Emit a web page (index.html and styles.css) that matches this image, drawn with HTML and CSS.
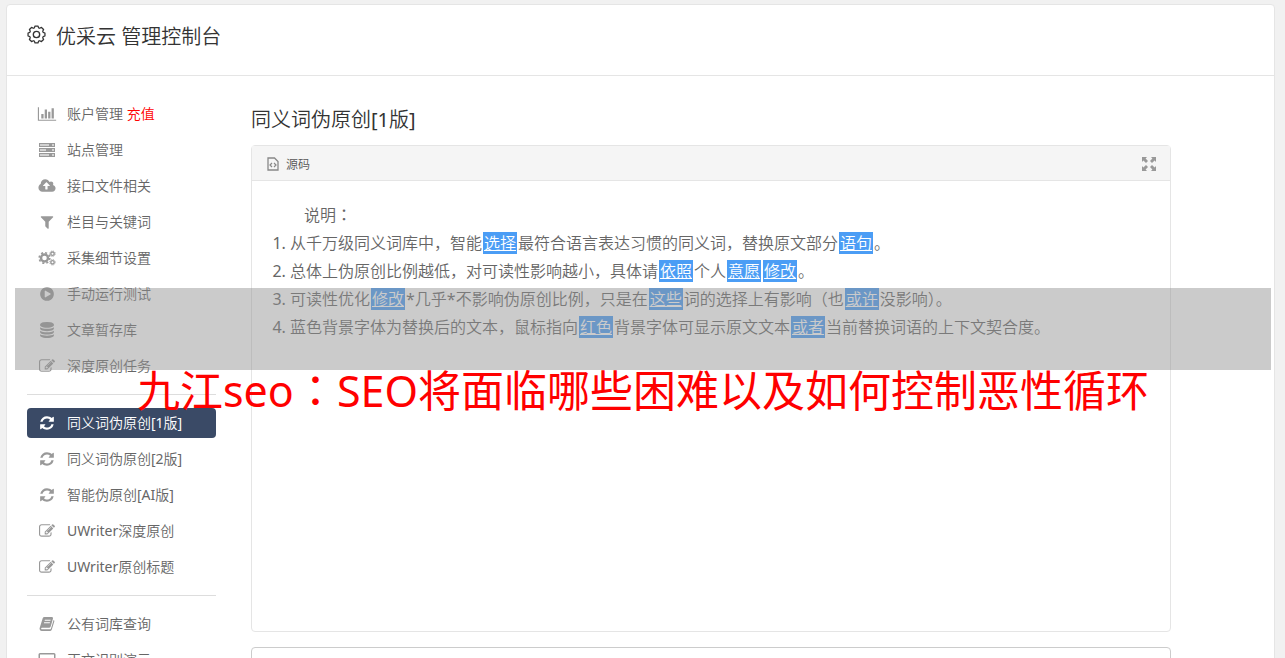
FILE: index.html
```html
<!DOCTYPE html>
<html lang="zh-CN">
<head>
    <meta charset="UTF-8">
    <meta name="viewport" content="width=device-width, initial-scale=1.0">
    <title>优采云 管理控制台</title>
    <link rel="stylesheet" href="styles.css">
</head>
<body>

<svg class="sprite" aria-hidden="true">
    <symbol id="chart" viewBox="0 0 2048 1792"><path d="M640 896v512h-256v-512h256zm384-512v1024h-256v-1024h256zm1024 1152v128h-2048v-1536h128v1408h1920zm-640-896v768h-256v-768h256zm384-384v1152h-256v-1152h256z"/></symbol>
    <symbol id="server" viewBox="0 0 18 16"><path opacity=".45" d="M1 1h16v4H1zM1 6h16v4H1zM1 11h16v4H1z"/><path d="M1 1h16v1H1zM1 4h16v1H1zM1 6h16v1H1zM1 9h16v1H1zM1 11h16v1H1zM1 14h16v1H1zM1 1h1v4H1zM1 6h1v4H1zM1 11h1v4H1zM11 2h3v2h-3zM16 2h1v2h-1zM8 7h6v2H8zM16 7h1v2h-1zM11 12h3v2h-3zM16 12h1v2h-1z"/></symbol>
    <symbol id="cloud" viewBox="0 0 1920 1792"><path d="M1280 864q0-14-9-23l-352-352q-9-9-23-9t-23 9l-351 351q-10 12-10 24 0 14 9 23t23 9h224v352q0 13 9.500 22.500t22.500 9.500h192q13 0 22.500-9.500t9.500-22.500v-352h224q13 0 22.500-9.500t9.500-22.500zm640 288q0 159-112.500 271.500t-271.500 112.500h-1088q-185 0-316.500-131.500t-131.500-316.500q0-130 70-240t188-165q-2-30-2-43 0-212 150-362t362-150q156 0 285.500 87t188.500 231q71-62 166-62 106 0 181 75t75 181q0 76-41 138 130 31 213.500 135.500t83.500 238.500z"/></symbol>
    <symbol id="filter" viewBox="0 0 1792 1792"><path d="M1595 295q17 41-14 70l-493 493v742q0 42-39 59-13 5-25 5-27 0-45-19l-256-256q-19-19-19-45v-486l-493-493q-31-29-14-70 17-39 59-39h1280q42 0 59 39z"/></symbol>
    <symbol id="cogs" viewBox="0 0 18 16">
        <g fill="none" stroke="currentColor">
            <circle cx="6.500" cy="8" r="3.500" stroke-width="2.400"/>
            <circle cx="6.500" cy="8" r="5.300" stroke-width="1.600" stroke-dasharray="2.080 2.080"/>
            <circle cx="14.500" cy="3.700" r="1.700" stroke-width="1.400"/>
            <circle cx="14.500" cy="3.700" r="2.700" stroke-width="1" stroke-dasharray="1.060 1.060"/>
            <circle cx="14.500" cy="12.300" r="1.700" stroke-width="1.400"/>
            <circle cx="14.500" cy="12.300" r="2.700" stroke-width="1" stroke-dasharray="1.060 1.060"/>
        </g>
    </symbol>
    <symbol id="play" viewBox="0 0 1792 1792"><path d="M896 128q209 0 385.500 103t279.500 279.500 103 385.500-103 385.500-279.500 279.500-385.500 103-385.500-103-279.500-279.500-103-385.500 103-385.500 279.500-279.500 385.500-103zm384 823q32-18 32-55t-32-55l-544-320q-31-19-64-1-32 19-32 56v640q0 37 32 56 16 8 32 8 17 0 32-9z"/></symbol>
    <symbol id="database" viewBox="0 0 1792 1792"><path d="M896 768q237 0 443-43t325-127v170q0 69-103 128t-280 93.500-385 34.500-385-34.500-280-93.500-103-128v-170q119 84 325 127t443 43zm0 768q237 0 443-43t325-127v170q0 69-103 128t-280 93.500-385 34.500-385-34.500-280-93.500-103-128v-170q119 84 325 127t443 43zm0-384q237 0 443-43t325-127v170q0 69-103 128t-280 93.500-385 34.500-385-34.500-280-93.500-103-128v-170q119 84 325 127t443 43zm0-1152q208 0 385 34.500t280 93.500 103 128v128q0 69-103 128t-280 93.500-385 34.500-385-34.500-280-93.500-103-128v-128q0-69 103-128t280-93.500 385-34.500z"/></symbol>
    <symbol id="edit" viewBox="0 0 1792 1792"><path d="M888 1184l116-116-152-152-116 116v56h96v96h56zm440-720q-16-16-33 1l-350 350q-17 17-1 33t33-1l350-350q17-17 1-33zm80 594v190q0 119-84.500 203.500t-203.500 84.500h-832q-119 0-203.500-84.500t-84.500-203.500v-832q0-119 84.500-203.500t203.500-84.500h832q63 0 117 25 15 7 18 23 3 17-9 29l-49 49q-14 14-32 8-23-6-45-6h-832q-66 0-113 47t-47 113v832q0 66 47 113t113 47h832q66 0 113-47t47-113v-126q0-13 9-22l64-64q15-15 35-7t20 29zm-96-738l288 288-672 672h-288v-288zm444 132l-92 92-288-288 92-92q28-28 68-28t68 28l152 152q28 28 28 68t-28 68z"/></symbol>
    <symbol id="refresh" viewBox="0 0 1792 1792"><path d="M1639 1056q0 5-1 7-64 268-268 434.500t-478 166.500q-146 0-282.500-55t-243.500-157l-129 129q-19 19-45 19t-45-19-19-45v-448q0-26 19-45t45-19h448q26 0 45 19t19 45-19 45l-137 137q71 66 161 102t187 36q134 0 250-65t186-179q11-17 53-117 8-23 30-23h192q13 0 22.500 9.500t9.500 22.500zm25-800v448q0 26-19 45t-45 19h-448q-26 0-45-19t-19-45 19-45l138-138q-148-137-349-137-134 0-250 65t-186 179q-11 17-53 117-8 23-30 23h-199q-13 0-22.500-9.500t-9.500-22.500v-7q65-268 270-434.500t480-166.500q146 0 284 55.500t245 156.500l130-129q19-19 45-19t45 19 19 45z"/></symbol>
    <symbol id="book" viewBox="0 0 16 16"><path fill-rule="evenodd" d="M5.500 1H13q1.300.2 1 1.600L11.700 10.500q-.4 1.200-1.700 1.200H2.800q-1 .3-.6 1.100.2.500 1 .5h7.600q.9 0 1.200-.9L14.600 4q1 .4.700 1.500l-2.500 8q-.5 1.500-2 1.500H3q-1.700 0-2.300-1.600-.3-.8.100-1.900L3.700 2.300Q4.100 1 5.500 1zM5.900 3.800l-.3 1h5.800l.3-1zM5.200 6.200l-.3 1h5.800l.3-1z"/></symbol>
    <symbol id="screen" viewBox="0 0 18 16"><path fill-rule="evenodd" d="M2 1h14q1.500 0 1.500 1.500v9q0 1.500-1.500 1.500h-4v2H6v-2H2Q.5 13 .5 11.500v-9Q.5 1 2 1zm0 1.500v9h14v-9z"/></symbol>
</svg>

<div class="card">
    <header class="card-header">
        <svg class="gear" viewBox="0 0 18 18" fill="none" stroke="currentColor">
            <path stroke-width="1.200" stroke-linejoin="round" d="M7.600 1h2.800l.6 1.700 1 .4 1.700-.8 2 2-.8 1.700.4 1 1.700.6v2.800l-1.700.6-.4 1 .8 1.700-2 2-1.700-.8-1 .4-.6 1.700H7.600L7 15.300l-1-.4-1.700.8-2-2 .8-1.700-.4-1L1 10.400V7.600L2.700 7l.4-1-.8-1.700 2-2L6 3.100l1-.4z"/>
            <circle cx="9" cy="9" r="3" stroke-width="1.300"/>
        </svg>
        <h1 class="card-title">优采云 管理控制台</h1>
    </header>

    <div class="layout">
        <nav class="sidebar">
            <ul class="menu">
                <li><a href="#"><svg class="icon"><use href="#chart"/></svg>账户管理 <span class="pay">充值</span></a></li>
                <li><a href="#"><svg class="icon"><use href="#server"/></svg>站点管理</a></li>
                <li><a href="#"><svg class="icon"><use href="#cloud"/></svg>接口文件相关</a></li>
                <li><a href="#"><svg class="icon"><use href="#filter"/></svg>栏目与关键词</a></li>
                <li><a href="#"><svg class="icon"><use href="#cogs"/></svg>采集细节设置</a></li>
                <li><a href="#"><svg class="icon"><use href="#play"/></svg>手动运行测试</a></li>
                <li><a href="#"><svg class="icon"><use href="#database"/></svg>文章暂存库</a></li>
                <li><a href="#"><svg class="icon"><use href="#edit"/></svg>深度原创任务</a></li>
            </ul>
            <ul class="menu">
                <li><a href="#" class="active"><svg class="icon"><use href="#refresh"/></svg>同义词伪原创[1版]</a></li>
                <li><a href="#"><svg class="icon"><use href="#refresh"/></svg>同义词伪原创[2版]</a></li>
                <li><a href="#"><svg class="icon"><use href="#refresh"/></svg>智能伪原创[AI版]</a></li>
                <li><a href="#"><svg class="icon"><use href="#edit"/></svg>UWriter深度原创</a></li>
                <li><a href="#"><svg class="icon"><use href="#edit"/></svg>UWriter原创标题</a></li>
            </ul>
            <ul class="menu">
                <li><a href="#"><svg class="icon"><use href="#book"/></svg>公有词库查询</a></li>
                <li><a href="#"><svg class="icon"><use href="#screen"/></svg>正文识别演示</a></li>
            </ul>
        </nav>

        <main class="content">
            <h2 class="content-title">同义词伪原创[1版]</h2>

            <section class="editor">
                <div class="toolbar">
                    <button type="button" class="tool">
                        <svg class="tool-icon" viewBox="0 0 12 14" fill="none" stroke="currentColor">
                            <path stroke-width="1.300" d="M1 1h6.500L11 4.500V13H1z"/>
                            <path stroke-width="1.200" d="M5 6L3 8l2 2M7 6l2 2-2 2"/>
                        </svg>
                        源码
                    </button>
                    <button type="button" class="tool" aria-label="全屏">
                        <svg class="expand-icon" viewBox="0 0 14 14" fill="currentColor">
                            <path d="M0 0h5L3.600 1.400 6 4 4 6 1.400 3.600 0 5zM14 0v5l-1.400-1.400L10 6 8 4l2.400-2.600L9 0zM0 14V9l1.400 1.400L4 8l2 2-2.400 2.600L5 14zM14 14H9l1.400-1.400L8 10l2-2 2.600 2.400L14 9z"/>
                        </svg>
                    </button>
                </div>
                <div class="editor-body">
                    <p class="note">说明<span class="mark" lang="zh-TW">：</span></p>
                    <ol class="rules">
                        <li>从千万级同义词库中，智能<u class="word">选择</u>最符合语言表达习惯的同义词，替换原文部分<u class="word">语句</u>。</li>
                        <li>总体上伪原创比例越低，对可读性影响越小，具体请<u class="word">依照</u>个人<u class="word">意愿</u><u class="word">修改</u>。</li>
                        <li>可读性优化<u class="word">修改</u>*几乎*不影响伪原创比例，只是在<u class="word">这些</u>词的选择上有影响（也<u class="word">或许</u>没影响）。</li>
                        <li>蓝色背景字体为替换后的文本，鼠标指向<u class="word">红色</u>背景字体可显示原文文本<u class="word">或者</u>当前替换词语的上下文契合度。</li>
                    </ol>
                </div>
            </section>

            <textarea class="result" rows="5" aria-label="结果"></textarea>
        </main>
    </div>
</div>

<div class="banner">
    <div class="banner-strip"></div>
    <p class="banner-text">九江seo<span class="mark" lang="zh-TW">：</span>SEO将面临哪些困难以及如何控制恶性循环</p>
</div>

</body>
</html>
```

FILE: styles.css
```css
* {
    box-sizing: border-box;
}
body {
    margin: 0;
    padding: 4px 10px 0 6px;
    height: 100vh;
    overflow: hidden;
    background-color: #f1f1f1;
    color: #666;
    font-family: "Noto Sans", "Noto Sans CJK SC DemiLight", "Noto Sans CJK SC", sans-serif;
    font-size: 14px;
}
h1, h2, p, ul, ol {
    margin: 0;
    padding: 0;
}
.sprite {
    display: none;
}
.mark {
    font-family: "Noto Sans CJK TC", sans-serif;
    line-height: 1;
}
.card {
    background-color: #fff;
    border: 1px solid #e5e5e5;
    border-radius: 4px;
}
.card-header {
    display: flex;
    align-items: center;
    gap: 10px;
    height: 71px;
    padding: 0 20px 6px;
    border-bottom: 1px solid #e5e5e5;
    color: #333;
}
.gear {
    width: 19px;
    height: 19px;
    margin-bottom: 6px;
}
.card-title,
.content-title {
    font-size: 20px;
    line-height: 30px;
    font-weight: 400;
    color: #333;
}
.layout {
    display: flex;
    gap: 35px;
    padding: 23px 20px;
}
.sidebar {
    flex: 0 0 189px;
}
.menu {
    list-style: none;
}
.menu + .menu {
    margin-top: 13px;
    padding-top: 13px;
    border-top: 1px solid #ddd;
}
.menu li + li {
    margin-top: 6px;
}
.menu a {
    display: flex;
    align-items: center;
    height: 30px;
    padding: 0 10px;
    border-radius: 4px;
    color: #666;
    line-height: 30px;
    text-decoration: none;
    white-space: pre;
}
.menu a.active {
    background-color: #3a4a66;
    color: #fff;
}
.icon {
    width: 20px;
    height: 16px;
    margin-right: 10px;
    fill: #999;
    color: #999;
}
.active .icon {
    fill: #fff;
}
.menu .pay {
    color: #f00;
}
.content {
    flex: 1;
    max-width: 920px;
    padding-top: 6px;
}
.content-title {
    margin-bottom: 10px;
}
.editor {
    border: 1px solid #e5e5e5;
    border-radius: 4px;
    margin-bottom: 15px;
}
.toolbar {
    display: flex;
    justify-content: space-between;
    align-items: center;
    height: 35px;
    padding: 2px 14px 0 15px;
    background-color: #f5f5f5;
    border-bottom: 1px solid #e5e5e5;
}
.tool {
    display: flex;
    align-items: center;
    gap: 7px;
    padding: 0;
    border: none;
    background: none;
    color: #555;
    font: inherit;
    font-size: 12px;
    cursor: pointer;
}
.tool-icon {
    width: 12px;
    height: 14px;
    color: #888;
}
.expand-icon {
    width: 14px;
    height: 14px;
    color: #999;
}
.editor-body {
    min-height: 450px;
    padding: 20px;
    font-size: 16px;
    line-height: 28px;
}
.note {
    text-indent: 2em;
}
.rules {
    padding-left: 18px;
}
.word {
    margin: 0 1px;
    padding: 0 1px;
    background-color: #4b9df5;
    color: #fff;
}
.result {
    display: block;
    width: 100%;
    border: 1px solid #ccc;
    border-radius: 4px;
    resize: none;
}
/* title banner over the page */
.banner {
    position: absolute;
    top: 288px;
    left: 15px;
    right: 14px;
    pointer-events: none;
}
.banner-strip {
    height: 82px;
    background-color: rgba(144, 144, 144, 0.47);
}
.banner-text {
    color: #f00;
    font-family: "Noto Sans", "Noto Sans CJK SC", sans-serif;
    font-size: 43px;
    line-height: 36px;
    text-align: center;
    white-space: nowrap;
}
.banner-text .mark {
    line-height: inherit;
}
```
